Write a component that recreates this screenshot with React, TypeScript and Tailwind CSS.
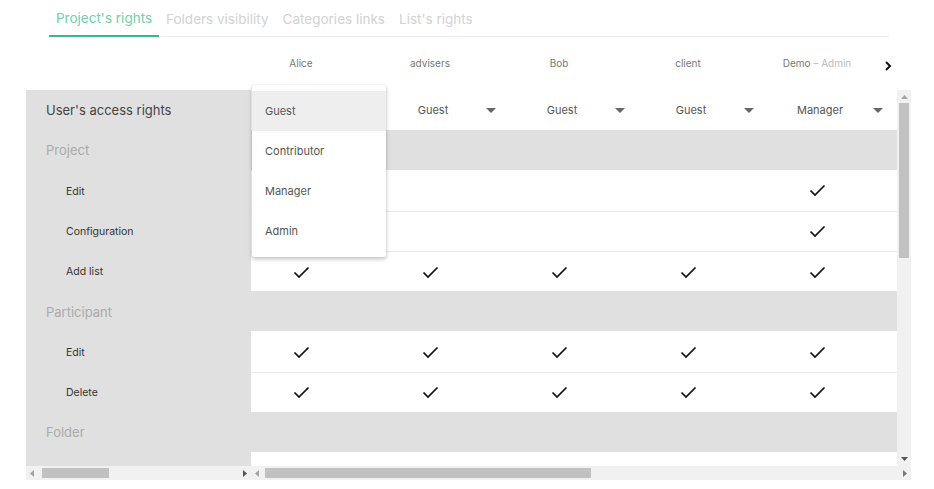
import React from 'react';

const FONT = { fontFamily: 'Inter, "Noto Sans", sans-serif' };

const users = [
  { name: 'Alice' },
  { name: 'advisers' },
  { name: 'Bob' },
  { name: 'client' },
  { name: 'Demo', sub: 'Admin' },
];

const roles = ['Guest', 'Guest', 'Guest', 'Guest', 'Manager'];

type Row =
  | { kind: 'cat'; label: string }
  | { kind: 'perm'; label: string; checks: boolean[] };

const rows: Row[] = [
  { kind: 'cat', label: 'Project' },
  { kind: 'perm', label: 'Edit', checks: [false, false, false, false, true] },
  { kind: 'perm', label: 'Configuration', checks: [false, false, false, false, true] },
  { kind: 'perm', label: 'Add list', checks: [true, true, true, true, true] },
  { kind: 'cat', label: 'Participant' },
  { kind: 'perm', label: 'Edit', checks: [true, true, true, true, true] },
  { kind: 'perm', label: 'Delete', checks: [true, true, true, true, true] },
  { kind: 'cat', label: 'Folder' },
  { kind: 'perm', label: '', checks: [false, false, false, false, false] },
];

const tabs = ["Project's rights", 'Folders visibility', 'Categories links', "List's rights"];

function Check() {
  return (
    <svg width="17" height="13" viewBox="0 0 17 13" fill="none">
      <path d="M1.5 6.5 L6 11 L15.5 1.5" stroke="#111" strokeWidth="1.7" />
    </svg>
  );
}

function Caret() {
  return (
    <svg width="10" height="5" viewBox="0 0 10 5">
      <path d="M0 0 H10 L5 5 Z" fill="#666" />
    </svg>
  );
}

function Tri({ dir, color = '#a3a3a3' }: { dir: 'up' | 'down' | 'left' | 'right'; color?: string }) {
  const d = {
    up: 'M0 4 L3.5 0 L7 4 Z',
    down: 'M0 0 L7 0 L3.5 4 Z',
    left: 'M4 0 L4 7 L0 3.5 Z',
    right: 'M0 0 L4 3.5 L0 7 Z',
  }[dir];
  const vert = dir === 'up' || dir === 'down';
  return (
    <svg width={vert ? 7 : 4} height={vert ? 4 : 7} viewBox={vert ? '0 0 7 4' : '0 0 4 7'}>
      <path d={d} fill={color} />
    </svg>
  );
}

export default function App() {
  return (
    <div className="w-[934px] h-[489px] bg-white overflow-hidden relative" style={FONT}>
      {/* tabs */}
      <div className="ml-[49px] w-[840px] flex border-b border-[#eeeeee] h-[37px] items-end">
        {tabs.map((t, i) => (
          <div
            key={t}
            className={`px-[7px] pb-[9px] text-[13.5px] leading-[16px] ${
              i === 0 ? 'text-[#6fcfaa] border-b-2 border-[#3cb88f] -mb-px' : 'text-[#d2d2d2]'
            }`}
          >
            {t}
          </div>
        ))}
      </div>

      {/* user header */}
      <div className="flex h-[53px] items-center ml-[251px] w-[646px] relative">
        {users.map((u) => (
          <div key={u.name} className="w-[129px] shrink-0 pr-[29px] flex justify-center text-[10px] text-[#777]">
            {u.name}
            {u.sub && <span className="text-[#bbbbbb]">&nbsp;–&nbsp;{u.sub}</span>}
          </div>
        ))}
        <div className="absolute right-[5px] top-[24px]">
          <svg width="7" height="10" viewBox="0 0 7 10">
            <path d="M1 1 L5 5 L1 9" stroke="#111" strokeWidth="2" fill="none" />
          </svg>
        </div>
      </div>

      {/* table */}
      <div className="ml-[26px] w-[885px] relative">
        <div className="flex h-[376px] overflow-hidden">
          {/* left panel */}
          <div className="w-[225px] shrink-0 bg-[#e0e0e0]">
            <div className="h-[40px] flex items-center pl-[20px] pt-[1px] text-[13px] text-[#444]">User's access rights</div>
            {rows.map((r, i) =>
              r.kind === 'cat' ? (
                <div key={i} className="h-[40.3px] flex items-center pl-[20px] pt-[2px] text-[13px] text-[#aaaaaa]">
                  {r.label}
                </div>
              ) : (
                <div key={i} className="h-[40.3px] flex items-center pl-[40px] pt-[2px] text-[10.5px] text-[#333]">
                  {r.label}
                </div>
              )
            )}
          </div>

          {/* right grid */}
          <div className="w-[646px] shrink-0 border-t border-[#e8e8e8] -mt-px">
            <div className="h-[40px] flex bg-white">
              {roles.map((r, i) => (
                <div key={i} className="w-[129px] shrink-0 flex items-center pt-[1px]">
                  {i > 0 && (
                    <>
                      <div className="w-[106px] text-center text-[11px] text-[#555]">{r}</div>
                      <Caret />
                    </>
                  )}
                </div>
              ))}
            </div>
            {rows.map((r, i) =>
              r.kind === 'cat' ? (
                <div key={i} className="h-[40.3px] bg-[#e0e0e0]" />
              ) : (
                <div
                  key={i}
                  className={`h-[40.3px] flex bg-white ${
                    i > 0 && rows[i - 1].kind === 'perm' ? 'border-t border-[#e8e8e8]' : ''
                  }`}
                >
                  {r.checks.map((c, j) => (
                    <div key={j} className="w-[129px] shrink-0 pr-[29px] pt-[1px] flex items-center justify-center">
                      {c && <Check />}
                    </div>
                  ))}
                </div>
              )
            )}
          </div>

          {/* vertical scrollbar */}
          <div className="w-[14px] shrink-0 bg-[#f1f1f1] flex flex-col items-center">
            <div className="h-[13px] flex items-center">
              <Tri dir="up" />
            </div>
            <div className="w-[10px] h-[155px] bg-[#c1c1c1]" />
            <div className="flex-1" />
            <div className="h-[14px] flex items-center">
              <Tri dir="down" color="#555" />
            </div>
          </div>
        </div>

        {/* horizontal scrollbars */}
        <div className="flex h-[14px]">
          <div className="w-[225px] shrink-0 bg-[#f1f1f1] flex items-center px-[4px]">
            <Tri dir="left" />
            <div className="ml-[8px] w-[67px] h-[10px] bg-[#c1c1c1]" />
            <div className="flex-1" />
            <Tri dir="right" color="#555" />
          </div>
          <div className="flex-1 bg-[#f1f1f1] flex items-center px-[4px]">
            <Tri dir="left" />
            <div className="ml-[6px] w-[326px] h-[10px] bg-[#c1c1c1]" />
            <div className="flex-1" />
            <Tri dir="right" color="#777" />
          </div>
        </div>

        {/* open role menu */}
        <div className="absolute left-[226px] top-[-5px] w-[134px] h-[172px] bg-white py-[6px] shadow-[0_2px_4px_rgba(0,0,0,0.25),0_0_1px_rgba(0,0,0,0.2)] rounded-[2px]">
          {['Guest', 'Contributor', 'Manager', 'Admin'].map((o, i) => (
            <div
              key={o}
              className={`h-[40px] flex items-center pl-[13px] pt-[1px] text-[11px] text-[#555] ${i === 0 ? 'bg-[#eeeeee]' : ''}`}
            >
              {o}
            </div>
          ))}
        </div>
      </div>
    </div>
  );
}
